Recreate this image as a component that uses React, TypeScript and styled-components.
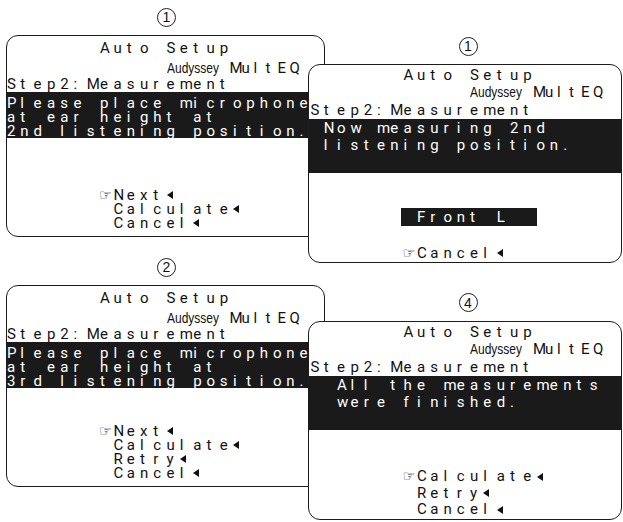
import React from 'react';
import styled, { createGlobalStyle } from 'styled-components';

const PITCH = 13.3;

const Global = createGlobalStyle`
  html, body { margin: 0; padding: 0; background: #fff; }
  body { font-family: Roboto, "Liberation Sans", Arial, sans-serif; color: #111; }
`;

type Metrics = {
  lh: number;
  padTop: number;
  rows: [number, number, number];
  bandH: number;
  bandPad: number;
  bandLh: number;
  padBottom: number;
  padLeft: number;
  height: number;
};

const LEFT: Metrics = {
  lh: 14,
  padTop: 4.5,
  rows: [20, 16, 15],
  bandH: 46,
  bandPad: 4,
  bandLh: 14,
  padBottom: 6.5,
  padLeft: 0,
  height: 202,
};

const RIGHT: Metrics = {
  lh: 16.5,
  padTop: 2,
  rows: [17, 18, 17],
  bandH: 54,
  bandPad: 1,
  bandLh: 17,
  padBottom: 1,
  padLeft: 1.5,
  height: 199,
};

const Page = styled.div`
  width: 623px;
  height: 522px;
  overflow: hidden;
  display: flex;
  align-items: flex-start;
  padding-left: 6px;
  box-sizing: border-box;
`;

const Column = styled.div<{ $top: number; $width: number; $shift: number; $gap: number; $front?: boolean }>`
  display: flex;
  flex-direction: column;
  flex: none;
  width: ${(p) => p.$width}px;
  padding-top: ${(p) => p.$top}px;
  margin-left: ${(p) => p.$shift}px;
  gap: ${(p) => p.$gap}px;
  position: relative;
  z-index: ${(p) => (p.$front ? 2 : 1)};
`;

const Figure = styled.div<{ $nudge: number }>`
  display: flex;
  flex-direction: column;
  align-items: center;
  & > :first-child {
    transform: translateX(${(p) => p.$nudge}px);
  }
`;

const Badge = styled.div`
  box-sizing: border-box;
  width: 19px;
  height: 19px;
  border: 1.3px solid #222;
  border-radius: 50%;
  display: flex;
  align-items: center;
  justify-content: center;
  font-family: "Liberation Sans", Arial, sans-serif;
  font-size: 14px;
  line-height: 1;
  color: #111;
  margin-bottom: 8.5px;
  margin-top: -0.5px;
`;

const Screen = styled.div<{ $h: number; $pb: number; $pl: number }>`
  box-sizing: border-box;
  width: 100%;
  height: ${(p) => p.$h}px;
  border: 1.5px solid #1c1c1c;
  border-radius: 12px;
  background: #fff;
  display: flex;
  flex-direction: column;
  overflow: hidden;
  padding-bottom: ${(p) => p.$pb}px;
  padding-left: ${(p) => p.$pl}px;
`;

const Header = styled.div<{ $pt: number }>`
  display: flex;
  flex-direction: column;
  padding-top: ${(p) => p.$pt}px;
  flex: none;
`;

const Row = styled.div<{ $h: number; $lh: number }>`
  display: flex;
  align-items: baseline;
  flex: none;
  height: ${(p) => p.$h}px;
  line-height: ${(p) => p.$lh}px;
  font-size: 15px;
  font-weight: 400;
  white-space: pre;
`;

const Band = styled.div<{ $h: number; $pad: number; $pl: number }>`
  box-sizing: border-box;
  flex: none;
  height: ${(p) => p.$h}px;
  padding-top: ${(p) => p.$pad}px;
  margin-left: -${(p) => p.$pl}px;
  padding-left: ${(p) => p.$pl}px;
  background: #1a1a1a;
  color: #fff;
  display: flex;
  flex-direction: column;
`;

const Highlight = styled.div`
  display: flex;
  height: 18px;
  line-height: 18px;
  margin-left: -3px;
  padding-left: 3px;
  background: #1a1a1a;
  color: #fff;
`;

const Spot = styled.div`
  display: flex;
  flex: none;
  margin-top: 35px;
  font-size: 15px;
  font-weight: 400;
  white-space: pre;
`;

const Menu = styled.div`
  display: flex;
  flex-direction: column;
  margin-top: auto;
  flex: none;
`;

const Cell = styled.span<{ $w: number }>`
  display: inline-block;
  flex: none;
  width: ${(p) => p.$w}px;
  white-space: pre;
`;

const Pointer = styled.span`
  font-family: "DejaVu Sans", sans-serif;
  font-weight: 400;
  font-size: 14.5px;
  margin-left: -1px;
`;

const Caret = styled.span`
  display: inline-block;
  width: 0;
  height: 0;
  border-top: 4.5px solid transparent;
  border-bottom: 4.5px solid transparent;
  border-right: 6px solid currentColor;
  margin-bottom: 0.5px;
`;

const Brand = styled.span`
  display: inline-block;
  flex: none;
  width: 63px;
  font-family: "Liberation Sans", Arial, sans-serif;
  font-weight: 400;
  font-size: 15px;
  transform: scaleX(0.8);
  transform-origin: left center;
`;

const Spacer = styled.span<{ $w: number }>`
  display: inline-block;
  flex: none;
  width: ${(p) => p.$w}px;
`;

function glyph(ch: string) {
  if (ch === '☞') return <Pointer>☞</Pointer>;
  if (ch === '◀') return <Caret />;
  if (ch === ' ') return '\u00a0';
  return ch;
}

function Cells({ text, pitch = PITCH }: { text: string; pitch?: number }) {
  return (
    <>
      {Array.from(text).map((ch, i) => (
        <Cell key={i} $w={pitch}>
          {glyph(ch)}
        </Cell>
      ))}
    </>
  );
}

type Panel = {
  label: string;
  band: string[];
  spot?: string;
  menu: string[];
};

function Display({ m, panel, nudge }: { m: Metrics; panel: Panel; nudge: number }) {
  const bandLines = [...panel.band];
  while (bandLines.length < 3) bandLines.push('');
  return (
    <Figure $nudge={nudge}>
      <Badge>{panel.label}</Badge>
      <Screen $h={m.height} $pb={m.padBottom} $pl={m.padLeft}>
        <Header $pt={m.padTop}>
          <Row $h={m.rows[0]} $lh={m.lh}>
            <Cells text="       Auto Setup" />
          </Row>
          <Row $h={m.rows[1]} $lh={m.lh}>
            <Spacer $w={12 * PITCH} />
            <Brand>Audyssey</Brand>
            <Cells text="MultEQ" pitch={12} />
          </Row>
          <Row $h={m.rows[2]} $lh={m.lh}>
            <Cells text="Step2:Measurement" />
          </Row>
        </Header>
        <Band $h={m.bandH} $pad={m.bandPad} $pl={m.padLeft}>
          {bandLines.map((l, i) => (
            <Row key={i} $h={m.bandLh} $lh={m.bandLh}>
              <Cells text={l} />
            </Row>
          ))}
        </Band>
        {panel.spot && (
          <Spot>
            <Cells text="       " />
            <Highlight>
              <Cells text={panel.spot} />
            </Highlight>
          </Spot>
        )}
        <Menu>
          {panel.menu.map((l, i) => (
            <Row key={i} $h={m.lh} $lh={m.lh}>
              <Cells text={l} />
            </Row>
          ))}
        </Menu>
      </Screen>
    </Figure>
  );
}

const leftPanels: Panel[] = [
  {
    label: '1',
    band: ['Please place microphone', 'at ear height at', '2nd listening position.'],
    menu: ['       ☞Next◀', '        Calculate◀', '        Cancel◀'],
  },
  {
    label: '2',
    band: ['Please place microphone', 'at ear height at', '3rd listening position.'],
    menu: ['       ☞Next◀', '        Calculate◀', '        Retry◀', '        Cancel◀'],
  },
];

const rightPanels: Panel[] = [
  {
    label: '1',
    band: [' Now measuring 2nd', ' listening position.'],
    spot: ' Front L  ',
    menu: ['       ☞Cancel◀'],
  },
  {
    label: '4',
    band: ['  All the measurements', '  were finished.'],
    menu: ['       ☞Calculate◀', '        Retry◀', '        Cancel◀'],
  },
];

export default function App() {
  return (
    <>
      <Global />
      <Page>
        <Column $top={8} $width={319} $shift={0} $gap={21}>
          {leftPanels.map((p, i) => (
            <Display key={i} m={LEFT} panel={p} nudge={1} />
          ))}
        </Column>
        <Column $top={37} $width={314} $shift={-17} $gap={30.5} $front>
          {rightPanels.map((p, i) => (
            <Display key={i} m={RIGHT} panel={p} nudge={3} />
          ))}
        </Column>
      </Page>
    </>
  );
}
